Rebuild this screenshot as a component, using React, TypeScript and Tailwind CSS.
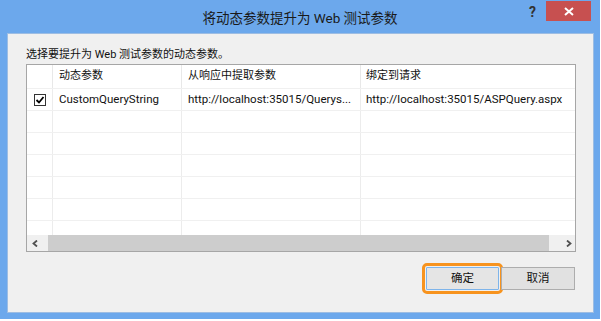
const font = { fontFamily: 'Roboto, "Noto Sans CJK SC", sans-serif' }

const rows = [
  {
    checked: true,
    name: 'CustomQueryString',
    from: 'http://localhost:35015/Querys...',
    to: 'http://localhost:35015/ASPQuery.aspx',
  },
  null,
  null,
  null,
  null,
  null,
]

function Checkbox() {
  return (
    <div className="flex h-[12px] w-[12px] items-center justify-center border border-[#333] bg-white">
      <svg width="10" height="10" viewBox="0 0 10 10">
        <polyline points="1.5,5 4,7.5 8.5,2" fill="none" stroke="#000" strokeWidth="1.8" />
      </svg>
    </div>
  )
}

function Row({ row }: { row: (typeof rows)[number] }) {
  return (
    <div className="flex h-[22px] shrink-0 border-b border-[#f0f0f0] text-[11.5px] text-[#111]">
      <div className="flex w-[26px] items-center justify-center border-r border-[#ececec]">
        {row?.checked && <Checkbox />}
      </div>
      <div className="flex w-[129px] items-center border-r border-[#ececec] pl-[6px]">{row?.name}</div>
      <div className="flex w-[179px] items-center border-r border-[#ececec] pl-[6px] whitespace-nowrap">{row?.from}</div>
      <div className="flex w-[211px] items-center pl-[5px] whitespace-nowrap">{row?.to}</div>
    </div>
  )
}

export default function App() {
  return (
    <div className="h-[321px] w-[601px] bg-white" style={font}>
      <div className="flex h-[319px] w-[600px] flex-col bg-[#6ca8ec]">
        {/* title bar */}
        <div className="grid h-[33px] shrink-0 grid-cols-[1fr_auto_1fr]">
          <div />
          <div className="pt-[8px] text-[13.5px] leading-[20px] text-[#1a1a1a]">将动态参数提升为 Web 测试参数</div>
          <div className="flex items-start justify-end pr-[9px]">
            <span className="mr-[10px] mt-[4px] text-[14px] font-bold leading-[16px] text-[#333]">?</span>
            <div className="mt-[1px] flex h-[20px] w-[45px] items-center justify-center bg-[#c75050]">
              <svg width="10" height="9" viewBox="0 0 10 9">
                <path d="M1 1 L9 8 M9 1 L1 8" stroke="#fff" strokeWidth="2" />
              </svg>
            </div>
          </div>
        </div>

        {/* client area */}
        <div className="mb-[6px] ml-[7px] mr-[6px] flex flex-1 flex-col border border-[#9dbde3] bg-[#f0f0f0] pl-[18px] pr-[17px] pt-[13px]">
          <div className="h-[16px] text-[11px] leading-[16px] text-[#111]">选择要提升为 Web 测试参数的动态参数。</div>

          <div className="mt-[1px] flex h-[188px] w-[550px] flex-col border border-[#a6a6a6] bg-white">
            <div className="flex h-[24px] shrink-0 border-b border-[#f0f0f0] text-[11px] text-[#111]">
              <div className="w-[26px] border-r border-[#e8e8e8]" />
              <div className="flex w-[129px] items-center border-r border-[#e8e8e8] pl-[6px]">动态参数</div>
              <div className="flex w-[179px] items-center border-r border-[#e8e8e8] pl-[6px]">从响应中提取参数</div>
              <div className="flex flex-1 items-center pl-[5px]">绑定到请求</div>
            </div>
            <div className="flex flex-1 flex-col overflow-hidden">
              {rows.map((r, i) => (
                <Row key={i} row={r} />
              ))}
              <div className="flex flex-1">
                <div className="w-[26px] border-r border-[#ececec]" />
                <div className="w-[129px] border-r border-[#ececec]" />
                <div className="w-[179px] border-r border-[#ececec]" />
              </div>
            </div>
            {/* horizontal scrollbar */}
            <div className="flex h-[16px] shrink-0 bg-[#cdcdcd]">
              <div className="flex w-[21px] items-center bg-[#f0f0f0] pl-[5px]">
                <svg width="6" height="7" viewBox="0 0 6 7">
                  <polyline points="5,0.5 1.5,3.5 5,6.5" fill="none" stroke="#505050" strokeWidth="1.8" />
                </svg>
              </div>
              <div className="flex-1" />
              <div className="flex w-[26px] items-center bg-[#f0f0f0] pl-[17px]">
                <svg width="6" height="7" viewBox="0 0 6 7">
                  <polyline points="1,0.5 4.5,3.5 1,6.5" fill="none" stroke="#505050" strokeWidth="1.8" />
                </svg>
              </div>
            </div>
          </div>

          <div className="mt-[15px] flex justify-end gap-[2px] pr-[1px]">
            <button className="h-[23px] w-[73px] rounded-[1px] border border-[#7eb4ea] bg-[#e5e5e5] text-[11.5px] text-[#111] outline-[3px] outline-offset-[1px] outline-[#f7931e] outline-solid">
              确定
            </button>
            <button className="h-[23px] w-[74px] border border-[#adadad] bg-[#e1e1e1] text-[11.5px] text-[#111]">
              取消
            </button>
          </div>
        </div>
      </div>
    </div>
  )
}
